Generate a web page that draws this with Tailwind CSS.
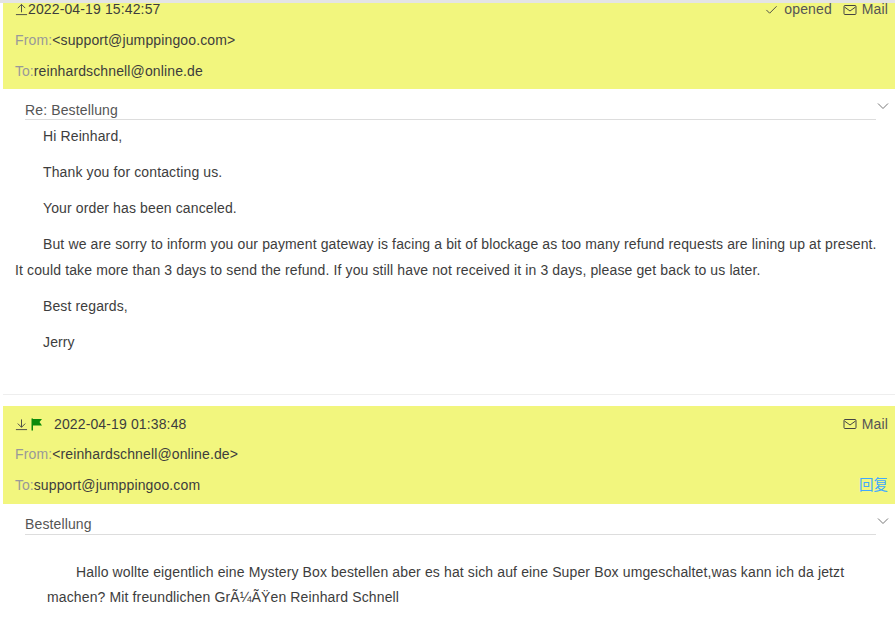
<!DOCTYPE html>
<html><head><meta charset="utf-8"><script src="https://cdn.jsdelivr.net/npm/@tailwindcss/browser@4"></script></head>
<body class="w-[895px] h-[624px] overflow-hidden bg-white font-['Liberation_Sans',Arial,sans-serif] text-[14px] tracking-[0.13px] text-[#3d3d3d]">
<div class="h-[3px] bg-[#e4e4e4]"></div>
<main class="h-[621px] overflow-hidden pl-[3px]">
  <div class="-mt-[9px]">
    <section class="bg-[#f2f67e] pt-0 pb-[2px] pl-3 pr-[7px]">
      <div class="flex justify-between h-[31px] items-center">
        <div class="flex items-center">
          <svg class="w-[13px] h-[13px]" viewBox="0 0 14 14" fill="none" stroke="#444" stroke-width="1"><path d="M1 12.5h12M7 10V1.5M3 5.5l4-4 4 4"/></svg>
          <span>2022-04-19 15:42:57</span>
        </div>
        <div class="flex items-center text-[#555]">
          <svg class="w-[13px] h-[13px] mr-[6px]" viewBox="0 0 14 14" fill="none" stroke="#444"><path d="M1.5 7.5l3.5 3.5 7.5-7.5"/></svg>
          <span class="mr-3">opened</span>
          <svg class="w-[14px] h-[14px] mr-[5px] -ml-px" viewBox="0 0 14 14" fill="none" stroke="#444"><rect x="1" y="2.5" width="12" height="9" rx="1"/><path d="M1.5 4l5.5 4 5.5-4"/></svg>
          <span>Mail</span>
        </div>
      </div>
      <div class="h-[31px] flex items-center"><span class="text-[#999]">From:</span><span>&lt;support@jumppingoo.com&gt;</span></div>
      <div class="h-[31px] flex items-center"><span class="text-[#999] tracking-normal">To:</span><span>reinhardschnell@online.de</span></div>
    </section>
    <section class="relative">
      <svg class="absolute right-[6px] top-[11px] w-[12px] h-[12px]" viewBox="0 0 12 12" fill="none" stroke="#777"><path d="M1 3.5l5 5 5-5"/></svg>
      <div class="ml-[22px] mr-[19px] h-[31px] pt-[12px] leading-[18px] text-[#555] border-b border-[#ddd]">Re: Bestellung</div>
      <div class="pl-3 pr-2 pt-[3px] leading-[26px] tracking-[0.125px] border-b border-[#eee] pb-[39px]">
        <p class="indent-[28px] mb-[10px]">Hi Reinhard,</p>
        <p class="indent-[28px] mb-[10px]">Thank you for contacting us.</p>
        <p class="indent-[28px] mb-[10px]">Your order has been canceled.</p>
        <p class="indent-[28px] mb-[10px]">But we are sorry to inform you our payment gateway is facing a bit of blockage as too many refund requests are lining up at present. It could take more than 3 days to send the refund. If you still have not received it in 3 days, please get back to us later.</p>
        <p class="indent-[28px] mb-[10px]">Best regards,</p>
        <p class="indent-[28px]">Jerry</p>
      </div>
    </section>
    <section class="bg-[#f2f67e] mt-[11px] pt-[3px] pb-[3px] pl-3 pr-[7px]">
      <div class="flex justify-between h-[30px] items-center">
        <div class="flex items-center">
          <svg class="w-[13px] h-[13px]" viewBox="0 0 14 14" fill="none" stroke="#444"><path d="M1 12.5h12M7 1.5V10M3 6l4 4 4-4"/></svg>
          <svg class="w-[13px] h-[13px] ml-[2px]" viewBox="0 0 13 13"><path d="M1.5 0.5h1.5v12h-1.5zM3 1h9l-2.5 3 2.5 3.5H3z" fill="#0a8a0a"/></svg>
          <span class="ml-[11px]">2022-04-19 01:38:48</span>
        </div>
        <div class="flex items-center text-[#555]">
          <svg class="w-[14px] h-[14px] mr-[5px] -ml-px" viewBox="0 0 14 14" fill="none" stroke="#444"><rect x="1" y="2.5" width="12" height="9" rx="1"/><path d="M1.5 4l5.5 4 5.5-4"/></svg>
          <span>Mail</span>
        </div>
      </div>
      <div class="h-[31px] flex items-center"><span class="text-[#999]">From:</span><span>&lt;reinhardschnell@online.de&gt;</span></div>
      <div class="h-[31px] flex items-center justify-between"><div><span class="text-[#999] tracking-normal">To:</span><span>support@jumppingoo.com</span></div><a class="text-[#40a9ff] text-[14.5px] tracking-normal font-['Liberation_Sans','Noto_Sans_CJK_SC',sans-serif]">回复</a></div>
    </section>
    <section class="relative">
      <svg class="absolute right-[6px] top-[11px] w-[12px] h-[12px]" viewBox="0 0 12 12" fill="none" stroke="#777"><path d="M1 3.5l5 5 5-5"/></svg>
      <div class="ml-[22px] mr-[19px] h-[31px] pt-[11px] leading-[18px] text-[#555] border-b border-[#ddd]">Bestellung</div>
      <p class="pl-[44px] pr-3 pt-[25px] indent-[29px] leading-[25px]">Hallo wollte eigentlich eine Mystery Box bestellen aber es hat sich auf eine Super Box umgeschaltet,was kann ich da jetzt machen? Mit freundlichen GrÃ¼ÃŸen Reinhard Schnell</p>
    </section>
  </div>
</main>
</body></html>
